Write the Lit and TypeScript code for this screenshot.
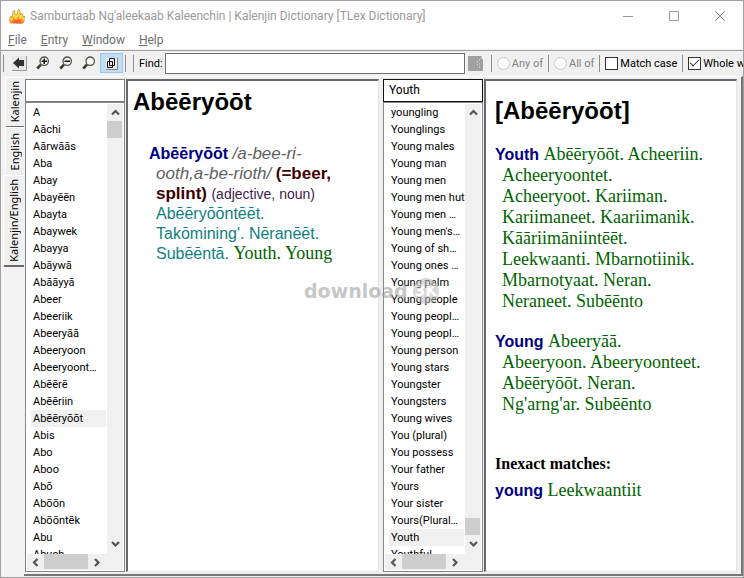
import { LitElement, html, css, svg, nothing } from "lit";
import { customElement, property } from "lit/decorators.js";
import { classMap } from "lit/directives/class-map.js";

const kalenjinWords = [
  "A", "Aāchi", "Aārwāās", "Aba", "Abay", "Abayēēn", "Abayta", "Abaywek", "Abayya", "Abāywā",
  "Abāāyyā", "Abeer", "Abeeriik", "Abeeryāā", "Abeeryoon", "Abeeryoont…", "Abēērē", "Abēēriin",
  "Abēēryōōt", "Abis", "Abo", "Aboo", "Abō", "Abōōn", "Abōōntēk", "Abu", "Abuch",
];

const englishWords = [
  "youngling", "Younglings", "Young males", "Young man", "Young men", "Young men hut", "Young men …",
  "Young men's…", "Young of sh…", "Young ones …", "Young palm", "Young people", "Young peopl…",
  "Young peopl…", "Young person", "Young stars", "Youngster", "Youngsters", "Young wives",
  "You (plural)", "You possess", "Your father", "Yours", "Your sister", "Yours(Plural…", "Youth",
  "Youthful",
];

const arrowPaths: Record<string, string> = {
  up: "M4 9.500L7.500 6L11 9.500",
  down: "M4 6L7.500 9.500L11 6",
  left: "M9.500 4L6 7.500L9.500 11",
  right: "M6 4L9.500 7.500L6 11",
};

const arrow = (dir: string) => html`
  <button class="arrow" aria-label="Scroll ${dir}">
    <svg width="15" height="15" viewBox="0 0 15 15">
      <path d=${arrowPaths[dir]} fill="none" stroke="#555" stroke-width="2.200" />
    </svg>
  </button>`;

@customElement("word-list")
class WordList extends LitElement {
  @property() label = "";
  @property() query = "";
  @property() selected = "";
  @property({ type: Boolean }) active = false;
  @property({ type: Boolean }) atEnd = false;
  @property({ attribute: false }) words: string[] = [];

  static styles = css`
    :host {
      display: flex;
      flex-direction: column;
      flex: 0 0 100px;
      min-height: 0;
      font: 11px Roboto, "Open Sans", sans-serif;
    }
    * { box-sizing: border-box; }
    .query {
      width: 100%;
      height: 23px;
      flex: none;
      margin: 0;
      padding: 0 5px 1px;
      border: 1px solid #7a7a7a;
      background: #fff;
      color: #000;
      font: 12px Roboto, sans-serif;
      outline: none;
      border-radius: 0;
    }
    .query.active { border-color: #111; }
    .box {
      flex: 1;
      min-height: 0;
      display: grid;
      grid-template-columns: 1fr 16px;
      grid-template-rows: 1fr 16px;
      border: 1px solid #828790;
      padding: 1px;
      background: #fff;
    }
    .words {
      list-style: none;
      margin: 0;
      padding: 0 1px 0 4px;
      overflow: hidden;
      min-height: 0;
    }
    .word {
      height: 17px;
      line-height: 18px;
      padding-left: 2px;
      white-space: nowrap;
      color: #000;
    }
    .word.selected { background: #f0f0f0; }
    .vbar, .hbar { display: flex; background: #f0f0f0; }
    .vbar { flex-direction: column; min-height: 0; padding-bottom: 2px; }
    .hbar { min-width: 0; grid-column: 1 / 3; padding-right: 18px; }
    .arrow {
      border: 0;
      padding: 0;
      margin: 0;
      background: none;
      flex: 0 0 17px;
      display: flex;
      align-items: center;
      justify-content: center;
    }
    .track { flex: 1; display: flex; flex-direction: column; }
    .track.end { justify-content: flex-end; }
    .vthumb { height: 17px; width: 15px; background: #cdcdcd; }
    .hthumb { width: 44px; height: 15px; background: #cdcdcd; }
  `;

  render() {
    return html`
      <input class=${classMap({ query: true, active: this.active })} aria-label=${this.label} .value=${this.query} />
      <div class="box">
        <ul class="words" role="listbox" aria-label=${this.label}>
          ${this.words.map((w) => html`<li role="option" class=${classMap({ word: true, selected: w === this.selected })}>${w}</li>`)}
        </ul>
        <div class="vbar">
          ${arrow("up")}
          <div class=${classMap({ track: true, end: this.atEnd })}><div class="vthumb"></div></div>
          ${arrow("down")}
        </div>
        <div class="hbar">
          ${arrow("left")}
          <div class="track"><div class="hthumb"></div></div>
          ${arrow("right")}
        </div>
      </div>`;
  }
}

const lens = (mark: unknown) => html`
  <svg width="14" height="14" viewBox="0 0 14 14">
    <path d="M1.200 12.500L5 8.700" stroke="#3a3a30" stroke-width="2.600" />
    <circle cx="8.200" cy="5.200" r="4.200" fill="#f6f6f6" stroke="#55554c" stroke-width="1.300" />
    ${mark}
  </svg>`;

@customElement("app-root")
class AppRoot extends LitElement {
  static styles = css`
    :host {
      display: block;
      height: 100vh;
      overflow: hidden;
      font: 12px Roboto, "Open Sans", sans-serif;
      color: #000;
    }
    * { box-sizing: border-box; }
    svg { display: block; flex: none; }
    button { font: inherit; margin: 0; padding: 0; border: 0; background: none; color: inherit; }
    .window {
      position: relative;
      height: 100%;
      display: flex;
      flex-direction: column;
      background: #f0f0f0;
      border: 1px solid #a2a2a2;
    }
    .titlebar {
      flex: 0 0 30px;
      display: flex;
      align-items: center;
      background: #fff;
      padding-left: 8px;
      color: #999;
    }
    .title { flex: 1; margin: 0 0 0 5px; font-size: 12px; font-weight: 400; white-space: nowrap; }
    .control { width: 46px; height: 30px; display: flex; align-items: center; justify-content: center; }
    .menu {
      flex: 0 0 18px;
      display: flex;
      align-items: center;
      gap: 14px;
      background: #fff;
      padding-left: 7px;
      color: #6d6d6d;
    }
    .menu button::first-letter { text-decoration: underline; }
    .toolbar {
      flex: 0 0 26px;
      margin-top: 1px;
      display: flex;
      align-items: center;
      border-top: 1px solid #a0a0a0;
      overflow: hidden;
      white-space: nowrap;
      font: 11px Roboto, sans-serif;
      padding: 0 0 1px 2px;
    }
    .toolbar > * { flex: none; }
    .sep { width: 1px; height: 17px; background: #8c8c8c; }
    .tool { width: 23px; height: 20px; display: flex; align-items: center; justify-content: center; }
    .tool.on { background: #c2dcf3; border: 1px solid #90c8f6; }
    .tools { display: flex; margin: 0 2px 0 4px; }
    .find-label { margin: 0 2px 0 5px; }
    .gap { margin-left: 7px; }
    .find { width: 300px; height: 21px; border: 1px solid #6e6e6e; background: #fff; border-radius: 0; padding: 0 4px; margin-right: 3px; }
    .history { width: 15px; height: 15px; background: #a0a0a0; margin-right: 8px; }
    .option { display: flex; align-items: center; gap: 2px; margin: 0 5px; }
    .option.dim { color: #838383; }
    .option input {
      appearance: none;
      margin: 0;
      width: 13px;
      height: 13px;
      background: #fff;
      border: 1px solid #333;
      display: grid;
      place-items: center;
    }
    .option input[type="radio"] { border-radius: 50%; border-color: #c4c4c4; }
    .option input:checked::after {
      content: "";
      width: 8px;
      height: 4px;
      border: solid #333;
      border-width: 0 0 1px 1px;
      transform: rotate(-45deg);
      margin-bottom: 3px;
    }
    .main { flex: 1; min-height: 0; display: flex; }
    .tabs {
      flex: 0 0 23px;
      display: flex;
      flex-direction: column;
      align-items: flex-end;
      padding-top: 1px;
      background: #f3f3f3;
      font: 11px "Noto Sans", sans-serif;
    }
    .tab {
      flex: none;
      width: 19px;
      display: flex;
      align-items: center;
      justify-content: center;
      border-top: 1px solid #fff;
      border-left: 1px solid #fff;
      border-bottom: 1px solid #696969;
      background: #f0f0f0;
      border-radius: 2px 0 0 2px;
    }
    .tab span { writing-mode: vertical-rl; transform: rotate(180deg); line-height: 16px; white-space: nowrap; }
    .first { height: 50px; }
    .second { height: 48px; border-bottom: 0; }
    .tab.current { width: 21px; height: 92px; border-bottom-width: 2px; }
    .frame {
      flex: 1;
      min-width: 0;
      display: flex;
      gap: 4px;
      margin-bottom: 1px;
      padding: 2px 4px 2px 1px;
      border-style: solid;
      border-color: #fff #777 #777 #fff;
      border-width: 1px 2px 2px 0;
    }
    .half { flex: 1; min-width: 0; display: flex; gap: 1px; }
    .article {
      flex: 1;
      min-width: 0;
      overflow: hidden;
      background: #fff;
      border-style: solid;
      border-width: 2px 1px 1px 2px;
      border-color: #696969 #e3e3e3 #e3e3e3 #696969;
      font-family: "Liberation Sans", Arial, sans-serif;
      font-size: 16px;
      white-space: nowrap;
    }
    .left { padding: 6px 5px; }
    .right { padding: 15px 9px; line-height: 21px; }
    h1 { font-size: 24px; line-height: 30px; margin: 0; font-weight: 700; }
    p { margin: 0; padding-left: 7px; text-indent: -7px; }
    .left p { margin: 27px 0 0 16px; line-height: 20px; }
    .right p { margin-top: 18px; }
    .right p + p { margin-top: 19px; }
    .head { color: #000080; font-weight: 700; }
    .say, .gloss { font-size: 17px; line-height: 1px; }
    .say { color: #606060; font-style: italic; }
    .gloss { color: #400000; font-weight: 700; }
    .pos { color: #402050; font-size: 14px; line-height: 1px; }
    .forms { color: #108080; }
    .serif { color: #006400; font-family: "Liberation Serif", "Times New Roman", serif; font-size: 18px; line-height: 1px; }
    .right h2 { font: 700 16px/21px "Liberation Serif", serif; margin: 38px 0 0; }
    .right .match { margin-top: 6px; }
    .watermark {
      position: absolute;
      left: 303px;
      top: 277px;
      display: flex;
      align-items: center;
      gap: 5px;
      font: 700 19px/26px "DejaVu Sans", sans-serif;
      color: #999;
      opacity: 0.55;
      pointer-events: none;
    }
    .badge { width: 26px; height: 26px; border-radius: 50%; background: #bbb; color: #fff; font-size: 15px; text-align: center; }
  `;

  private lines(items: string[]) {
    return items.map((t, i) => html`${i ? html`<br />` : nothing}${t}`);
  }

  private fullEntry(head: string, items: string[]) {
    return html`<p><span class="head">${head}</span> <span class="serif">${this.lines(items)}</span></p>`;
  }

  render() {
    return html`
      <div class="window">
        <header class="titlebar">
          <svg width="16" height="16" viewBox="0 0 16 16">
            <path d="M1 15L.500 10L2 8L3 10L4 4L5.500 2L6 6L7.500 7L9.500 1L11.500 4.500L11 7L13 5L14.500 9L15.500 8L15 14L13 15.500Z" fill="#ffd83a" stroke="#75501a" stroke-width=".4" />
            <path d="M1 15V12L3 13L5 9L7 12L9.500 8L11 12L13 10L15 14L13 15.500Z" fill="#ff8a2b" />
            <path d="M4 15L6 12L8 13L11 11L12 15Z" fill="#ff5437" />
          </svg>
          <h1 class="title">Samburtaab Ng'aleekaab Kaleenchin | Kalenjin Dictionary [TLex Dictionary]</h1>
          <button class="control" aria-label="Minimize"><svg width="10" height="10"><path d="M0 5.500H10" stroke="#999" /></svg></button>
          <button class="control" aria-label="Maximize"><svg width="10" height="10"><path d="M.5.500H9.500V9.500H.5Z" fill="none" stroke="#999" /></svg></button>
          <button class="control" aria-label="Close"><svg width="10" height="10"><path d="M0 0L10 10M10 0L0 10" stroke="#888" /></svg></button>
        </header>
        <nav class="menu"><button>File</button><button>Entry</button><button>Window</button><button>Help</button></nav>
        <div class="toolbar" role="toolbar">
          <div class="sep"></div>
          <div class="tools">
            <button class="tool" aria-label="Back">
              <svg width="15" height="15" viewBox="0 0 15 15">
                <path d="M0 0H14V14H0Z" fill="#e6e6e6" /><path d="M0 14.500H14.500V0" fill="none" stroke="#999" />
                <path d="M1 7L7 1.500V4H12V10H7V12.500Z" fill="#303030" />
              </svg>
            </button>
            <button class="tool" aria-label="Zoom in">${lens(svg`<path d="M5.500 5.200H11M8.200 2.500V8" stroke="#111" stroke-width="1.500" />`)}</button>
            <button class="tool" aria-label="Zoom out">${lens(svg`<path d="M5.500 5.200H11" stroke="#111" stroke-width="1.500" />`)}</button>
            <button class="tool" aria-label="Reset zoom">${lens(nothing)}</button>
            <button class="tool on" aria-label="Side by side">
              <svg width="13" height="13" viewBox="0 0 13 13">
                <path d="M1 1H12V12H1Z" fill="#e8e8e8" /><path d="M1 12.500H12.500V1" fill="none" stroke="#888" />
                <path d="M4.500 1.500H9.500V8.500H4.500ZM2.500 4.500H7.500V10.500H2.500Z" fill="none" stroke="#111" />
              </svg>
            </button>
          </div>
          <div class="sep"></div>
          <div class="sep gap"></div>
          <label class="find-label" for="find">Find:</label>
          <input class="find" id="find" />
          <button class="history" aria-label="Search">
            <svg width="15" height="15"><path d="M9 6h1M11 4h1M11 8h1M9 9h1M11 11h1" stroke="#e8e8e8" /><path d="M15 0v3" stroke="#f0f0f0" stroke-width="3" /></svg>
          </button>
          <div class="sep"></div>
          <label class="option dim"><input type="radio" name="mode" />Any of</label>
          <div class="sep"></div>
          <label class="option dim"><input type="radio" name="mode" />All of</label>
          <div class="sep"></div>
          <label class="option"><input type="checkbox" />Match case</label>
          <div class="sep"></div>
          <label class="option"><input type="checkbox" checked />Whole words</label>
        </div>
        <main class="main">
          <div class="tabs" role="tablist">
            <button class="tab first" role="tab"><span>Kalenjin</span></button>
            <button class="tab second" role="tab"><span>English</span></button>
            <button class="tab current" role="tab" aria-selected="true"><span>Kalenjin/English</span></button>
          </div>
          <div class="frame">
            <section class="half">
              <word-list label="Kalenjin" .words=${kalenjinWords} selected="Abēēryōōt"></word-list>
              <article class="article left">
                <h1>Abēēryōōt</h1>
                <p>
                  <span class="head">Abēēryōōt</span> <span class="say">/a-bee-ri-<br />ooth,a-be-rioth/</span>
                  <span class="gloss">(=beer,<br />splint)</span> <span class="pos">(adjective, noun)</span><br />
                  <span class="forms">${this.lines(["Abēēryōōntēēt.", "Takōmining'. Nēranēēt.", "Subēēntā."])}</span>
                  <span class="serif">Youth. Young</span>
                </p>
              </article>
            </section>
            <section class="half">
              <word-list label="English" query="Youth" .words=${englishWords} selected="Youth" .active=${true} .atEnd=${true}></word-list>
              <article class="article right">
                <h1>[Abēēryōōt]</h1>
                ${this.fullEntry("Youth", [
                  "Abēēryōōt. Acheeriin.", "Acheeryoontet.", "Acheeryoot. Kariiman.", "Kariimaneet. Kaariimanik.",
                  "Kāāriimāniintēēt.", "Leekwaanti. Mbarnotiinik.", "Mbarnotyaat. Neran.", "Neraneet. Subēēnto",
                ])}
                ${this.fullEntry("Young", ["Abeeryāā.", "Abeeryoon. Abeeryoonteet.", "Abēēryōōt. Neran.", "Ng'arng'ar. Subēēnto"])}
                <h2>Inexact matches:</h2>
                <p class="match"><span class="head">young</span> <span class="serif">Leekwaantiit</span></p>
              </article>
            </section>
          </div>
        </main>
        <div class="watermark" aria-hidden="true">download<span class="badge">3K</span></div>
      </div>`;
  }
}
